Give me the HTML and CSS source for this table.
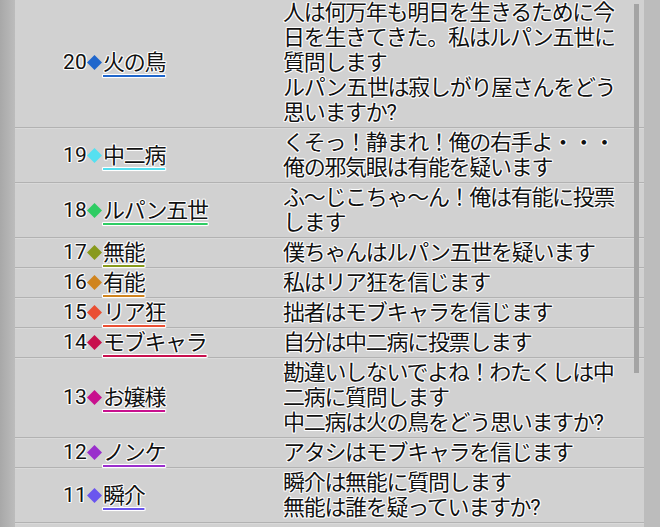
FILE: index.html
```html
<!DOCTYPE html>
<html lang="ja">
<head>
<meta charset="utf-8">
<link rel="stylesheet" href="styles.css">
</head>
<body>
<div class="screen">
  <div class="edge-left"></div>
  <div class="main">
    <ul class="log">
      <li class="row">
        <div class="who"><span class="num">20</span><svg class="dia" viewBox="0 0 14 14"><polygon points="7,0 14,7 7,14 0,7" fill="#1f66cc"/></svg><span class="name c20">火の鳥</span></div>
        <div class="msg">人は何万年も明日を生きるために今日を生きてきた。私はルパン五世に質問します<br>ルパン五世は寂しがり屋さんをどう思いますか?</div>
      </li>
      <li class="row">
        <div class="who"><span class="num">19</span><svg class="dia" viewBox="0 0 14 14"><polygon points="7,0 14,7 7,14 0,7" fill="#55e0f0"/></svg><span class="name c19">中二病</span></div>
        <div class="msg">くそっ！静まれ！俺の右手よ・・・<br>俺の邪気眼は有能を疑います</div>
      </li>
      <li class="row">
        <div class="who"><span class="num">18</span><svg class="dia" viewBox="0 0 14 14"><polygon points="7,0 14,7 7,14 0,7" fill="#2ecc63"/></svg><span class="name c18">ルパン五世</span></div>
        <div class="msg">ふ～じこちゃ～ん！俺は有能に投票します</div>
      </li>
      <li class="row">
        <div class="who"><span class="num">17</span><svg class="dia" viewBox="0 0 14 14"><polygon points="7,0 14,7 7,14 0,7" fill="#889a1c"/></svg><span class="name c17">無能</span></div>
        <div class="msg">僕ちゃんはルパン五世を疑います</div>
      </li>
      <li class="row">
        <div class="who"><span class="num">16</span><svg class="dia" viewBox="0 0 14 14"><polygon points="7,0 14,7 7,14 0,7" fill="#d0841e"/></svg><span class="name c16">有能</span></div>
        <div class="msg">私はリア狂を信じます</div>
      </li>
      <li class="row">
        <div class="who"><span class="num">15</span><svg class="dia" viewBox="0 0 14 14"><polygon points="7,0 14,7 7,14 0,7" fill="#ea4f33"/></svg><span class="name c15">リア狂</span></div>
        <div class="msg">拙者はモブキャラを信じます</div>
      </li>
      <li class="row">
        <div class="who"><span class="num">14</span><svg class="dia" viewBox="0 0 14 14"><polygon points="7,0 14,7 7,14 0,7" fill="#c8104e"/></svg><span class="name c14">モブキャラ</span></div>
        <div class="msg">自分は中二病に投票します</div>
      </li>
      <li class="row">
        <div class="who"><span class="num">13</span><svg class="dia" viewBox="0 0 14 14"><polygon points="7,0 14,7 7,14 0,7" fill="#c8108e"/></svg><span class="name c13">お嬢様</span></div>
        <div class="msg">勘違いしないでよね！わたくしは中二病に質問します<br>中二病は火の鳥をどう思いますか?</div>
      </li>
      <li class="row">
        <div class="who"><span class="num">12</span><svg class="dia" viewBox="0 0 14 14"><polygon points="7,0 14,7 7,14 0,7" fill="#9a2fcc"/></svg><span class="name c12">ノンケ</span></div>
        <div class="msg">アタシはモブキャラを信じます</div>
      </li>
      <li class="row">
        <div class="who"><span class="num">11</span><svg class="dia" viewBox="0 0 14 14"><polygon points="7,0 14,7 7,14 0,7" fill="#6a55ee"/></svg><span class="name c11">瞬介</span></div>
        <div class="msg">瞬介は無能に質問します<br>無能は誰を疑っていますか?</div>
      </li>
      <li class="row">
        <div class="who"></div>
        <div class="msg">&nbsp;</div>
      </li>
    </ul>
    <div class="scrollbar"></div>
  </div>
  <div class="edge-right"></div>
</div>
</body>
</html>
```

FILE: styles.css
```css
html, body {
  margin: 0;
  padding: 0;
  height: 100%;
  overflow: hidden;
  background: #d0d0d0;
}

.screen {
  display: flex;
  width: 660px;
  height: 527px;
  overflow: hidden;
  font-family: Roboto, "Noto Sans CJK JP", sans-serif;
  font-size: 22px;
  color: #111;
}

.edge-left {
  width: 15px;
  flex: none;
  background: linear-gradient(to right, #a8a8a8, #bcbcbc);
}

.edge-right {
  width: 16px;
  flex: none;
  background: #bcbcbc;
}

.main {
  position: relative;
  width: 629px;
  flex: none;
  background: #d1d1d1;
}

.log {
  list-style: none;
  margin: -2px 0 0 0;
  padding: 0;
}

.row {
  display: grid;
  grid-template-columns: 268px 345px;
  align-items: center;
  padding: 2px 0;
  line-height: 25px;
  border-bottom: 1px solid #b2b2b2;
  box-shadow: inset 0 1px 0 #d9d9d9;
  text-shadow: 1px 0 0 #fff, -1px 0 0 #fff, 0 1px 0 #fff, 0 -1px 0 #fff,
    1px 1px 0 #f0f0f0, -1px -1px 0 #f0f0f0, 1px -1px 0 #f0f0f0, -1px 1px 0 #f0f0f0,
    0 0 2px #fff;
}

.who {
  display: flex;
  align-items: center;
  height: 25px;
  padding-left: 48px;
  white-space: nowrap;
}

.num {
  font-size: 21px;
  letter-spacing: 0.2px;
}

.dia {
  width: 15px;
  height: 15px;
  margin: 0 1px 0 0;
  flex: none;
}

.name {
  letter-spacing: -1.3px;
  text-decoration-line: underline;
  text-decoration-thickness: 2px;
  text-underline-offset: 5px;
  text-decoration-skip-ink: none;
}

.c20 { text-decoration-color: #1f66cc; }
.c19 { text-decoration-color: #55e0f0; }
.c18 { text-decoration-color: #2ecc63; }
.c17 { text-decoration-color: #889a1c; }
.c16 { text-decoration-color: #d0841e; }
.c15 { text-decoration-color: #ea4f33; }
.c14 { text-decoration-color: #c8104e; }
.c13 { text-decoration-color: #c8108e; }
.c12 { text-decoration-color: #9a2fcc; }
.c11 { text-decoration-color: #6a55ee; }

.msg {
  letter-spacing: -1.3px;
  line-break: normal;
}

.scrollbar {
  position: absolute;
  left: 619px;
  top: 4px;
  width: 5px;
  height: 369px;
  background: #a4a4a4;
}
```
